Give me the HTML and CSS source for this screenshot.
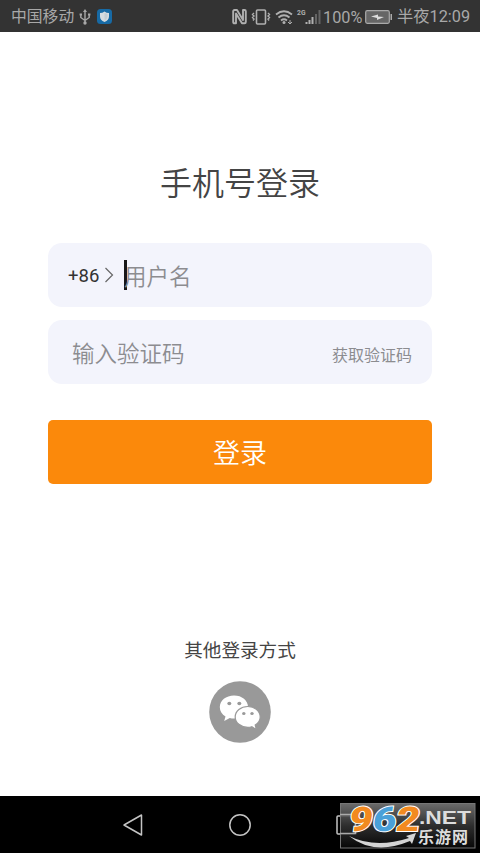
FILE: index.html
```html
<!DOCTYPE html>
<html lang="zh-CN">
<head>
<meta charset="utf-8">
<title>手机号登录</title>
<link rel="stylesheet" href="styles.css">
</head>
<body>
<div class="phone">
  <header class="status">
    <span class="carrier">中国移动</span>
    <svg class="usb" width="12" height="16" viewBox="0 0 12 16" fill="none" stroke="#a8a8a8" stroke-width="1.4"><path d="M6 2v12M1.800 6v2.500L6 11.500M10.200 6v2.500L6 11.500"/><path d="M6 0l2 3H4zM.6 4.500h2.400v2H.6zM9 4.500h2.400v2H9z" fill="#a8a8a8" stroke="none"/><circle cx="6" cy="14" r="1.700" fill="#a8a8a8" stroke="none"/></svg>
    <svg class="guard" width="15" height="15" viewBox="0 0 15 15"><rect width="15" height="15" rx="3.500" fill="#176aa5"/><path d="M7.500 2.500Q9.500 4 12 4v3.500q0 3.500-4.500 5.500Q3 11 3 7.500V4q2.500 0 4.500-1.500z" fill="#d5dce1"/><path d="M7.500 4v7.500Q10.500 10 10.500 7.500V5z" fill="#c3cdd4"/></svg>
    <svg class="signals" width="90" height="20" viewBox="0 0 90 20" fill="none" stroke="#b0b0b0">
      <path d="M4 16.300H2.500Q1.200 16.300 1.200 15V4.300Q1.200 3 2.500 3H5l6 10V3h1.500q1.300 0 1.300 1.300V15q0 1.300-1.300 1.300H10L4 6.500z" stroke-width="1.900" stroke-linejoin="round"/>
      <path d="M25.500 3h7q1 0 1 1v12q0 1-1 1h-7q-1 0-1-1V4q0-1 1-1z" stroke-width="1.600"/>
      <path d="M22 6l-1.500 1.500L22 9l-1.500 1.500L22 12l-1 1.500M36 6l1.500 1.500L36 9l1.500 1.500L36 12l1 1.500" stroke-width="1.400"/>
      <path d="M44 7.500q8-6.500 16 0M46.500 10.500q5.500-4.500 11 0M49 13.500q3-2.500 6 0" stroke-width="1.800"/><circle cx="52" cy="15.500" r="1.500" fill="#b0b0b0" stroke="none"/>
      <path d="M58 13v4M56 15l2 2 2-2" stroke-width="1"/>
      <text class="network" x="65" y="8" textLength="8.500" lengthAdjust="spacingAndGlyphs" fill="#b0b0b0" stroke="none">2G</text>
      <path d="M74.500 17v-2M77.500 17v-4M80.500 17v-7" stroke-width="2"/><path d="M84 17V7M87.500 17V3" stroke="#646464" stroke-width="2"/>
    </svg>
    <span class="percent">100%</span>
    <svg class="battery" width="28" height="14" viewBox="0 0 28 14"><rect x=".7" y=".7" width="23.600" height="12.600" rx="1.500" fill="#666" stroke="#aaa" stroke-width="1.200"/><path d="M25.500 4h1.500v6h-1.500z" fill="#aaa"/><path d="M6 6.500l7-2v2l6 .5-7 3V8z" fill="#ddd"/></svg>
    <time class="time">半夜12:09</time>
  </header>

  <main class="login">
    <h1 class="title">手机号登录</h1>
    <form class="form">
      <div class="field phone-field">
        <span class="code">+86</span>
        <svg class="chevron" width="10" height="18" viewBox="0 0 10 18" fill="none" stroke="#666" stroke-width="1.200"><path d="M1.500 2L8.500 9l-7 7"/></svg>
        <i class="caret"></i>
        <span class="hint">用户名</span>
      </div>
      <div class="field verify-field">
        <span class="hint">输入验证码</span>
        <span class="send">获取验证码</span>
      </div>
      <button class="submit" type="button">登录</button>
    </form>
    <section class="other">
      <p class="other-label">其他登录方式</p>
      <svg class="wechat" width="62" height="62" viewBox="0 0 62 62">
        <circle cx="31" cy="31" r="30.800" fill="#999"/>
        <path d="M25 14.500c-8 0-14.200 5-14.200 11.500 0 4.200 2.200 7.200 5.700 9.500L15.200 40l5.600-3q2 .6 4.200.6c8 0 14-5 14-11.600S33 14.500 25 14.500z" fill="#fff"/>
        <path d="M38.800 25.500c-7 0-12.600 4.600-12.600 10.400s5.600 10.400 12.600 10.400q2 0 4-.6l4.600 2.900-1.200-4.500c3-1.900 5-4.800 5-8.200 0-5.800-5.500-10.400-12.400-10.400z" fill="#fff" stroke="#999" stroke-width="1.200"/>
        <g fill="#999"><ellipse cx="20.300" cy="22.500" rx="2" ry="1.700"/><ellipse cx="30.300" cy="22.500" rx="2" ry="1.700"/><ellipse cx="34.800" cy="32.500" rx="1.700" ry="1.500"/><ellipse cx="43" cy="32.500" rx="1.700" ry="1.500"/></g>
      </svg>
    </section>
  </main>

  <nav class="navbar">
    <svg class="nav-icon" width="24" height="26" viewBox="0 0 24 26"><path d="M3 13L20.500 3v20z"/></svg>
    <svg class="nav-icon" width="24" height="26" viewBox="0 0 24 26"><circle cx="12" cy="13" r="10.200"/></svg>
    <svg class="nav-icon" width="24" height="26" viewBox="0 0 24 26"><rect x="2" y="4" width="18" height="18" rx="1"/></svg>
    <svg class="watermark" width="136" height="46" viewBox="0 0 136 46">
      <defs><linearGradient id="plate" x2="0" y2="1"><stop stop-color="#777"/><stop offset=".5" stop-color="#333"/><stop offset="1" stop-color="#080808"/></linearGradient></defs>
      <rect x=".5" y=".5" width="134.500" height="44.500" fill="url(#plate)" fill-opacity=".9" stroke="#777"/>
      <path d="M0 11.500h15.500v19H0" fill="none" stroke="#aaa" stroke-width="1.600"/>
      <path d="M9 33Q35 46 69 35l-3-2 10-3-4 11-2-3Q34 53 9 33z" fill="#d4d4d4"/>
      <g class="digits"><text transform="translate(8 28) skewX(-8)" textLength="23.500" lengthAdjust="spacingAndGlyphs" fill="#f28a20">9</text><text transform="translate(31.500 28) skewX(-8)" textLength="23.500" lengthAdjust="spacingAndGlyphs" fill="#4aa0d8">6</text><text transform="translate(55 28) skewX(-8)" textLength="23.500" lengthAdjust="spacingAndGlyphs" fill="#f28a20">2</text></g>
      <text class="domain" x="79" y="21" textLength="52" lengthAdjust="spacingAndGlyphs">.NET</text>
      <text class="site" x="78" y="40" textLength="50">乐游网</text>
    </svg>
  </nav>
</div>
</body>
</html>
```
FILE: styles.css
```css
* { box-sizing: border-box; }
body { margin: 0; background: #fff; font-family: Roboto, "Noto Sans CJK SC", sans-serif; }
.phone { width: 480px; height: 853px; display: flex; flex-direction: column; overflow: hidden; }
.status { height: 32px; flex: none; display: flex; align-items: center; padding: 1px 0 0 11px; background: #333; color: #a8a8a8; white-space: nowrap; }
.status > * { flex: none; }
.carrier { width: 68px; font-size: 15.8px; line-height: 32px; padding-top: 1px; }
.guard { margin-left: 6px; }
.signals { margin-left: 120px; }
.network { font: bold 8px Roboto, sans-serif; }
.percent { width: 39px; margin-left: 1px; padding-top: 1px; font-size: 16.3px; }
.battery { margin-left: 3px; }
.time { margin-left: 4px; padding-top: 1px; font-size: 16.3px; line-height: 30px; }
.login { flex: 1; display: flex; flex-direction: column; align-items: center; }
.title { margin: 132px 0 0; font-size: 32px; font-weight: 350; line-height: 40px; color: #444; }
.form { width: 384px; margin-top: 39px; display: flex; flex-direction: column; }
.field { height: 64px; display: flex; align-items: center; border-radius: 14px; background: #f3f4fc; }
.phone-field { padding-left: 20px; }
.code { width: 36px; padding-top: 2px; font-size: 18.5px; color: #333; }
.caret { width: 3px; height: 30px; margin-left: 10px; background: #171717; }
.hint { padding-top: 3px; font-size: 22.5px; font-weight: 350; line-height: 32px; color: #8c8c90; }
.phone-field .hint { margin-left: -3px; }
.verify-field { margin-top: 13px; padding: 0 20px 0 24px; justify-content: space-between; }
.send { font-size: 16px; color: #8c8c90; line-height: 24px; padding-top: 8px; }
.submit { height: 64px; margin-top: 36px; padding: 4px 0 0; border: 0; border-radius: 5px; background: #fb890b; color: #fff; font: 350 27px/40px Roboto, "Noto Sans CJK SC", sans-serif; }
.other { margin-top: 153px; display: flex; flex-direction: column; align-items: center; }
.other-label { margin: 0; font-size: 18.6px; line-height: 28px; color: #444; }
.wechat { margin-top: 16px; }
.navbar { position: relative; height: 57px; flex: none; display: flex; justify-content: center; align-items: center; gap: 83px; background: #000; }
.nav-icon { fill: none; stroke: #c4c4c4; stroke-width: 1.5; stroke-linejoin: round; }
.watermark { position: absolute; left: 340px; top: 7px; overflow: visible; }
.digits { font: 900 34px Roboto, sans-serif; stroke: #fff; stroke-width: 2px; paint-order: stroke; }
.domain { font: bold 18px "Liberation Sans", sans-serif; fill: #ddd; }
.site { font: bold 16px Roboto, "Noto Sans CJK SC", sans-serif; fill: #ddd; }
```
